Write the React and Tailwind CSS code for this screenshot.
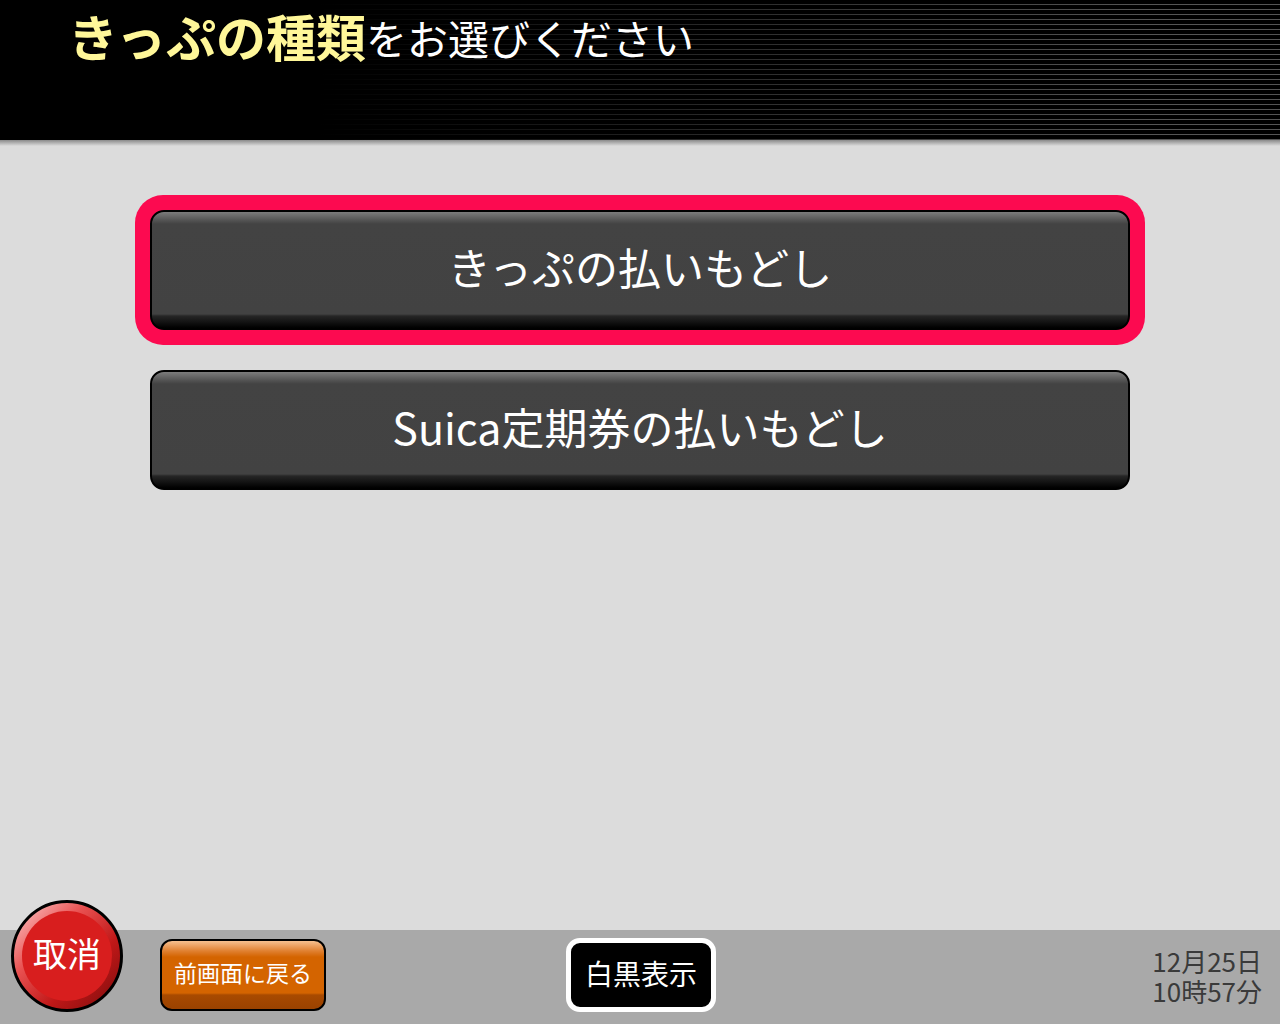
import React from 'react';

const jp = { fontFamily: '"Noto Sans CJK JP", "Noto Sans", sans-serif' };

const MenuButton = ({ label }) => (
  <button
    className="w-full h-[120px] pb-[8px] rounded-[14px] border-2 border-black bg-[#424242] bg-[linear-gradient(to_bottom,#7c7c7c_0px,#505050_9px,#434343_12px,#424242_calc(100%-14px),#262626_calc(100%-12px),#000_100%)] text-white text-[43px] leading-none flex items-center justify-center"
    style={jp}
  >
    {label}
  </button>
);

export default function App() {
  return (
    <div className="w-[1280px] h-[1024px] flex flex-col bg-[#dcdcdc] overflow-hidden" style={jp}>
      {/* Header */}
      <div className="h-[140px] shrink-0 bg-black bg-[linear-gradient(to_right,#000_25%,rgba(0,0,0,0)_90%),repeating-linear-gradient(to_bottom,#000_0px,#000_4px,#555_4px,#555_5px)] pl-[68px] pt-[10px]">
        <h1 className="flex items-end leading-none">
          <span className="text-[50px] font-bold text-[#fff799]">きっぷの種類</span>
          <span className="text-[41px] text-white pb-[2px]">をお選びください</span>
        </h1>
      </div>
      <div className="h-[6px] shrink-0 bg-[linear-gradient(to_bottom,#8a8a8a,#dcdcdc)]" />

      {/* Menu */}
      <div className="flex-1 flex flex-col pt-[49px]">
        <div className="ml-[135px] w-[1010px] p-[15px] rounded-[28px] bg-[#fc0a50]">
          <MenuButton label="きっぷの払いもどし" />
        </div>
        <div className="ml-[150px] w-[980px] mt-[25px]">
          <MenuButton label="Suica定期券の払いもどし" />
        </div>
      </div>

      {/* Footer */}
      <div className="h-[94px] shrink-0 bg-[#a9a9a9] flex items-start pl-[11px] pr-[18px]">
        <button className="-mt-[30px] w-[112px] h-[112px] rounded-full border-[3px] border-black bg-[linear-gradient(135deg,#ffd0d0_0%,#e85050_35%,#c01818_65%,#7a0c0c_100%)] flex items-center justify-center shrink-0">
          <span className="w-[90px] h-[90px] pb-[6px] rounded-full bg-[#d81e1e] flex items-center justify-center text-white text-[34px] leading-none">
            取消
          </span>
        </button>
        <button className="ml-[37px] mt-[9px] w-[166px] h-[72px] pb-[6px] rounded-[12px] border-2 border-black bg-[#d46400] bg-[linear-gradient(to_bottom,#f6c090_0px,#e08030_10px,#d46400_16px,#d46400_calc(100%-16px),#a84a00_calc(100%-14px),#9a4200_100%)] text-white text-[23px] leading-none flex items-center justify-center">
          前画面に戻る
        </button>
        <button className="ml-[240px] mt-[8px] w-[150px] h-[74px] pb-[5px] rounded-[14px] border-[5px] border-white bg-black text-white text-[28px] leading-none flex items-center justify-center">
          白黒表示
        </button>
        <div className="ml-auto mt-[16px] flex flex-col items-end text-[#3a3a3a] text-[26px]">
          <div className="leading-[30px]">12月25日</div>
          <div className="leading-[30px]">10時57分</div>
        </div>
      </div>
    </div>
  );
}
